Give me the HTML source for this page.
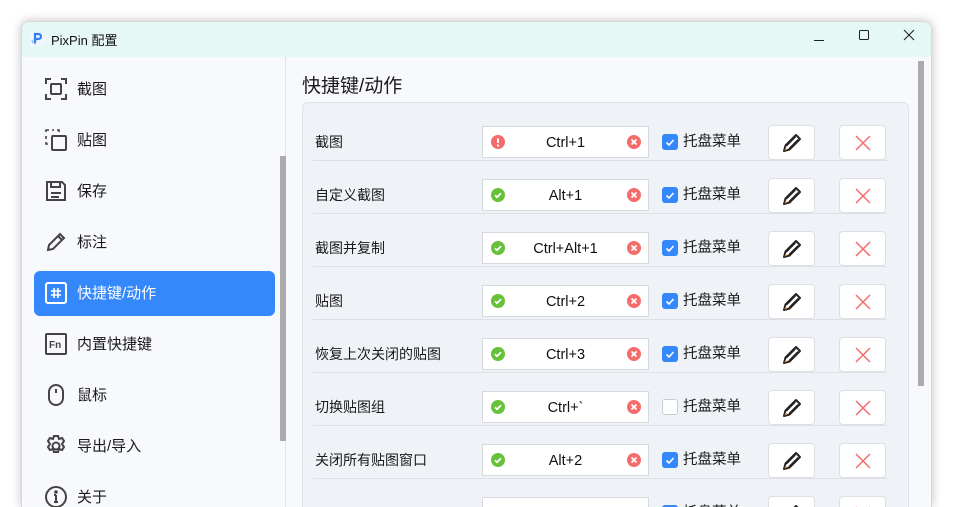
<!DOCTYPE html>
<html><head><meta charset="utf-8"><style>
*{box-sizing:border-box;margin:0;padding:0}
html,body{width:953px;height:507px;overflow:hidden}
body{background:#fff;font-family:"Liberation Sans","Noto Sans CJK SC",sans-serif;position:relative}
.win{position:absolute;left:21px;top:21px;width:911px;height:486px;border-radius:8px 8px 0 0;overflow:hidden;background:#f7f9fc;box-shadow:0 0 10px rgba(0,0,0,.25);border:1px solid #d8d8d8;border-bottom:none}
.title{position:absolute;left:0;top:0;width:100%;height:35px;background:#e6f8f5}
.title .t{position:absolute;left:29px;top:8px;font-size:13px;color:#111}
.side{position:absolute;left:0;top:35px;width:264px;height:470px;border-right:1px solid #e3e5ea}
.it{position:absolute;left:12px;width:241px;height:45px;font-size:15px;color:#1a1a1a;line-height:45px;padding-left:43px;border-radius:6px}
.it svg{position:absolute;left:11px;top:11px}
.it.a{background:#3588fb;color:#fff}
.sb{position:absolute;background:#ababab;width:6px}
.h{position:absolute;left:280px;top:49px;font-size:19px;color:#1a1a1a}
.panel{position:absolute;left:280px;top:80px;width:607px;height:440px;background:#eff2f6;border:1px solid #dfe2e7;border-radius:6px}
.row{position:absolute;left:10px;width:574px;height:53px;border-bottom:1px solid #dde1e6}
.lb{position:absolute;left:2px;top:24px;font-size:14px;color:#1a1a1a;line-height:20px}
.inp{position:absolute;left:169px;top:18px;width:167px;height:32px;background:#fff;border:1px solid #d6d9de;font-size:14.5px;text-align:center;line-height:32px;color:#111}
.inp .l{position:absolute;left:8px;top:8px;display:block;height:14px;line-height:0}
.inp .r{position:absolute;right:7px;top:8px;display:block;height:14px;line-height:0}
.cb{position:absolute;left:349px;top:26px;width:16px;height:16px;border-radius:3px;background:#3588fb}
.cb.off{background:#fff;border:1px solid #c8ccd2}
.cb svg{display:block}
.tp{position:absolute;left:370px;top:24px;font-size:14.5px;color:#1a1a1a;line-height:20px}
.btn{position:absolute;top:17px;width:47px;height:35px;background:#fff;border:1px solid #dcdfe4;border-radius:4px}
.btn svg{position:absolute;left:13px;top:7px}
</style></head><body>
<div class="win">
<div class="title">
<svg style="position:absolute;left:8px;top:9px" width="15" height="15" viewBox="0 0 15 15"><rect width="15" height="15" rx="3" fill="#f0f5ff"/><path d="M5 12V3h3.5a2.5 2.5 0 010 5H5" fill="none" stroke="#2f7ff5" stroke-width="2.2"/><path d="M2 9a5 5 0 004 4" fill="none" stroke="#8cc0ff" stroke-width="1.4"/></svg>
<div class="t">PixPin 配置</div>
<svg style="position:absolute;left:791px;top:12px" width="12" height="12"><path d="M1 6.5h10" stroke="#222" stroke-width="1"/></svg>
<svg style="position:absolute;left:836px;top:7px" width="12" height="12"><rect x="1.5" y="1.5" width="9" height="9" rx="1" fill="none" stroke="#222"/></svg>
<svg style="position:absolute;left:881px;top:7px" width="12" height="12"><path d="M1 1l10 10M11 1L1 11" stroke="#222" stroke-width="1.1"/></svg>
</div>
<div class="side">
<div class="it" style="top:10px"><svg width="22" height="22" viewBox="0 0 22 22" fill="none" stroke="#444" stroke-width="2"><path d="M1 6V1h5M16 1h5v5M21 16v5h-5M6 21H1v-5"/><rect x="6" y="6" width="10" height="10" rx="1"/></svg>截图</div>
<div class="it" style="top:61px"><svg width="22" height="22" viewBox="0 0 22 22" fill="none" stroke="#444" stroke-width="2"><path d="M1 3V1h3M7 1h2M12 1h2v2M1 7v3M1 13v2h2" stroke-width="1.6"/><rect x="7" y="7" width="14" height="14" rx="1"/></svg>贴图</div>
<div class="it" style="top:112px"><svg width="22" height="22" viewBox="0 0 22 22" fill="none" stroke="#444" stroke-width="2"><path d="M2 2h15l3 3v15H2z"/><path d="M6 2v5h9V2M6 13h10M6 17h8"/></svg>保存</div>
<div class="it" style="top:163px"><svg width="22" height="22" viewBox="0 0 22 22" fill="none" stroke="#444" stroke-width="2"><path d="M3 19l1-5L15 3l4 4L8 18z"/><path d="M13 5l4 4"/></svg>标注</div>
<div class="it a" style="top:214px"><svg width="22" height="22" viewBox="0 0 22 22" fill="none" stroke="#fff" stroke-width="2"><rect x="1" y="1" width="20" height="20" rx="2"/><path d="M9 6v10M13 6v10M6 9h10M6 13h10" stroke-width="1.6"/></svg>快捷键/动作</div>
<div class="it" style="top:265px"><svg width="22" height="22" viewBox="0 0 22 22" fill="none" stroke="#444" stroke-width="2"><rect x="1" y="1" width="20" height="20" rx="1"/><text x="4" y="15" font-size="10" font-weight="bold" fill="#444" stroke="none" font-family="Liberation Sans">Fn</text></svg>内置快捷键</div>
<div class="it" style="top:316px"><svg width="22" height="22" viewBox="0 0 22 22" fill="none" stroke="#444" stroke-width="2"><rect x="4" y="1" width="14" height="20" rx="7"/><path d="M11 5v4"/></svg>鼠标</div>
<div class="it" style="top:367px"><svg width="22" height="22" viewBox="0 0 22 22" fill="none" stroke="#444" stroke-width="2"><path d="M9 1h4l1 3 3-1 2 3-2 3 2 3-2 3-3-1-1 3H9l-1-3-3 1-2-3 2-3-2-3 2-3 3 1z"/><circle cx="11" cy="11" r="3.5"/></svg>导出/导入</div>
<div class="it" style="top:418px"><svg width="22" height="22" viewBox="0 0 22 22" fill="none" stroke="#444" stroke-width="2"><circle cx="11" cy="11" r="10"/><path d="M11 9v7M9 16h4M9 9h2"/><circle cx="11" cy="6" r=".8" fill="#444"/></svg>关于</div>
<div class="sb" style="left:258px;top:99px;height:285px"></div>
</div>
<div class="h">快捷键/动作</div>
<div class="sb" style="left:896px;top:39px;height:325px"></div>
<div class="panel" id="p"></div>
</div>
<script>
var rows=[["截图","Ctrl+1",1,1],["自定义截图","Alt+1",0,1],["截图并复制","Ctrl+Alt+1",0,1],["贴图","Ctrl+2",0,1],["恢复上次关闭的贴图","Ctrl+3",0,1],["切换贴图组","Ctrl+`",0,0],["关闭所有贴图窗口","Alt+2",0,1],["","",0,1]];
var h="";
var ok='<svg width="14" height="14"><circle cx="7" cy="7" r="7" fill="#67c23a"/><path d="M4 7.2l2 2 4-4" stroke="#fff" stroke-width="1.8" fill="none"/></svg>';
var er='<svg width="14" height="14"><circle cx="7" cy="7" r="7" fill="#f56c6c"/><path d="M7 3.5v4.5" stroke="#fff" stroke-width="2"/><circle cx="7" cy="10.5" r="1.1" fill="#fff"/></svg>';
var cl='<svg width="14" height="14"><circle cx="7" cy="7" r="7" fill="#f56c6c"/><path d="M4.5 4.5l5 5M9.5 4.5l-5 5" stroke="#fff" stroke-width="1.8"/></svg>';
rows.forEach(function(r,i){
h+='<div class="row" style="top:'+(5+53*i)+'px"><div class="lb">'+r[0]+'</div><div class="inp">'+(r[1]?'<span class="l">'+(r[2]?er:ok)+'</span>'+r[1]+'<span class="r">'+cl+'</span>':'')+'</div>'+
'<div class="cb'+(r[3]?'':' off')+'">'+(r[3]?'<svg width="16" height="16"><path d="M4.5 8.5l2.5 2.5 4.5-5" stroke="#fff" stroke-width="1.6" fill="none"/></svg>':'')+'</div><div class="tp">托盘菜单</div>'+
'<div class="btn" style="left:455px"><svg width="20" height="20" viewBox="0 0 20 20"><path d="M2 18l1.5-5.5L14 2l4 4L7.5 16.5z" fill="none" stroke="#222" stroke-width="2" stroke-linejoin="round"/><path d="M4.5 13l9-9M7 15.5l9-9" stroke="#222" stroke-width="1.2"/><path d="M2.5 17.5l1-3 2 2z" fill="#d8903a"/></svg></div>'+
'<div class="btn" style="left:526px"><svg width="20" height="20"><path d="M3 3l14 14M17 3L3 17" stroke="#f56c6c" stroke-width="1.5"/></svg></div></div>';
});
document.getElementById("p").innerHTML=h;
</script>
</body></html>
